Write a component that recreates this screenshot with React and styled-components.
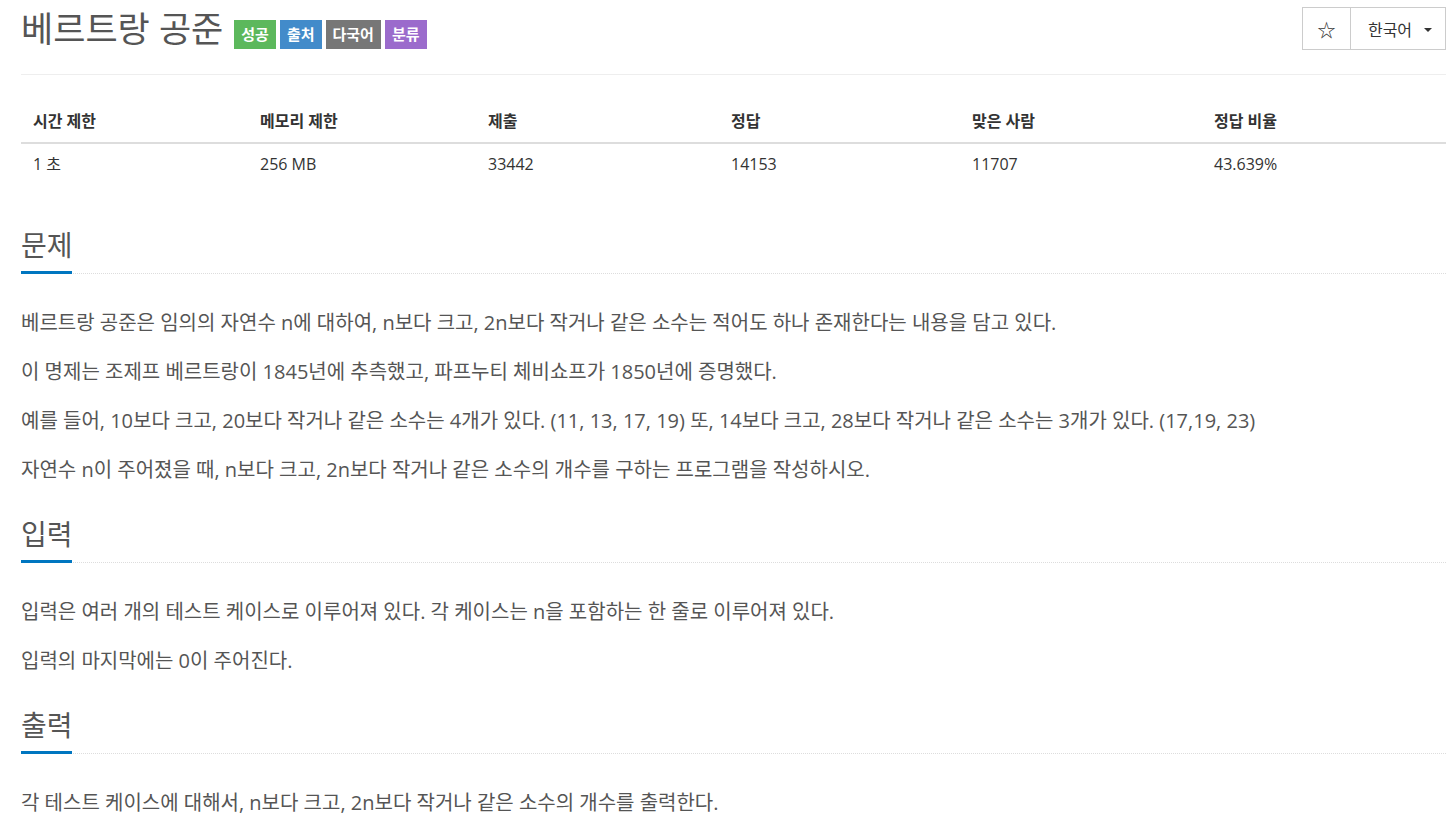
import React from "react";
import styled, {createGlobalStyle} from "styled-components";

const GlobalStyle = createGlobalStyle`
  body {
    margin: 0;
    background: #fff;
    font-family: "Open Sans", "Noto Sans CJK KR", sans-serif;
    color: #555;
  }
`;

const stats = [
  {label: "시간 제한", value: "1 초"},
  {label: "메모리 제한", value: "256 MB"},
  {label: "제출", value: "33442"},
  {label: "정답", value: "14153"},
  {label: "맞은 사람", value: "11707"},
  {label: "정답 비율", value: "43.639%"},
];

const badges = [
  {text: "성공", color: "#5cb85c"},
  {text: "출처", color: "#428bca"},
  {text: "다국어", color: "#777777"},
  {text: "분류", color: "#9b6bcc"},
];

const sections = [
  {
    title: "문제",
    lines: [
      "베르트랑 공준은 임의의 자연수 n에 대하여, n보다 크고, 2n보다 작거나 같은 소수는 적어도 하나 존재한다는 내용을 담고 있다.",
      "이 명제는 조제프 베르트랑이 1845년에 추측했고, 파프누티 체비쇼프가 1850년에 증명했다.",
      "예를 들어, 10보다 크고, 20보다 작거나 같은 소수는 4개가 있다. (11, 13, 17, 19) 또, 14보다 크고, 28보다 작거나 같은 소수는 3개가 있다. (17,19, 23)",
      "자연수 n이 주어졌을 때, n보다 크고, 2n보다 작거나 같은 소수의 개수를 구하는 프로그램을 작성하시오.",
    ],
  },
  {
    title: "입력",
    lines: [
      "입력은 여러 개의 테스트 케이스로 이루어져 있다. 각 케이스는 n을 포함하는 한 줄로 이루어져 있다.",
      "입력의 마지막에는 0이 주어진다.",
    ],
  },
  {
    title: "출력",
    lines: ["각 테스트 케이스에 대해서, n보다 크고, 2n보다 작거나 같은 소수의 개수를 출력한다."],
  },
];

function App() {
  return (
    <Page>
      <GlobalStyle />
      <Header>
        <Title>
          베르트랑 공준
          <Badges>
            {badges.map((b) => (
              <Badge key={b.text} color={b.color}>{b.text}</Badge>
            ))}
          </Badges>
        </Title>
        <BtnGroup>
          <StarBtn>☆</StarBtn>
          <LangBtn>
            한국어 <Caret />
          </LangBtn>
        </BtnGroup>
      </Header>

      <StatsTable>
        {stats.map((s) => (
          <HeadCell key={s.label}>{s.label}</HeadCell>
        ))}
        {stats.map((s) => (
          <Cell key={s.label}>{s.value}</Cell>
        ))}
      </StatsTable>

      {sections.map((sec, idx) => (
        <Section key={sec.title} first={idx === 0}>
          <SectionHead>
            <SectionTitle>{sec.title}</SectionTitle>
          </SectionHead>
          {sec.lines.map((line, i) => (
            <Para key={i}>{line}</Para>
          ))}
        </Section>
      ))}
    </Page>
  );
}

export default App;

const Page = styled.div`
  padding: 0 8px 0 21px;
`;

const Header = styled.div`
  display: flex;
  justify-content: space-between;
  align-items: flex-start;
  padding-top: 7px;
  padding-bottom: 23px;
  border-bottom: 1px solid #eee;
`;

const Title = styled.h1`
  margin: 0;
  display: flex;
  align-items: center;
  font-size: 35px;
  font-weight: 400;
  color: #555;
  line-height: 44px;
`;

const Badges = styled.span`
  display: flex;
  gap: 4px;
  margin-left: 11px;
  margin-top: 11px;
`;

const Badge = styled.span`
  background: ${(p) => p.color};
  color: #fff;
  font-size: 15px;
  font-weight: 700;
  height: 29px;
  line-height: 29px;
  padding: 0 7px;
  display: inline-block;
`;

const BtnGroup = styled.div`
  display: flex;
`;

const BaseBtn = styled.div`
  border: 1px solid #ccc;
  background: #fff;
  color: #333;
  display: flex;
  align-items: center;
  justify-content: center;
  font-size: 16px;
  box-sizing: border-box;
  height: 43px;
`;

const StarBtn = styled(BaseBtn)`
  width: 49px;
  font-size: 18px;
`;

const LangBtn = styled(BaseBtn)`
  width: 95px;
  border-left: none;
  gap: 12px;
  padding-left: 4px;
`;

const Caret = styled.span`
  width: 0;
  height: 0;
  border-left: 4px solid transparent;
  border-right: 4px solid transparent;
  border-top: 4px solid #333;
  margin-top: 2px;
`;

const StatsTable = styled.div`
  display: grid;
  grid-template-columns: 227px 228px 243px 241px 242px 1fr;
  margin-top: 26px;
  font-size: 16px;
`;

const HeadCell = styled.div`
  font-weight: 700;
  color: #333;
  padding: 8px 12px 9px;
  line-height: 24px;
  border-bottom: 2px solid #ddd;
`;

const Cell = styled.div`
  color: #333;
  padding: 5px 12px;
  line-height: 30px;
`;

const Section = styled.section`
  margin-top: ${(p) => (p.first ? "41px" : "29px")};
`;

const SectionHead = styled.div`
  border-bottom: 1px dotted #ddd;
  margin-bottom: 34px;
`;

const SectionTitle = styled.h2`
  display: inline-block;
  margin: 0 0 -1px;
  font-size: 28px;
  font-weight: 400;
  color: #555;
  line-height: 40px;
  padding-bottom: 6px;
  border-bottom: 3px solid #0076c0;
  width: 51px;
  white-space: nowrap;
`;

const Para = styled.p`
  margin: 0 0 19px;
  font-size: 20px;
  line-height: 30px;
  color: #555;
`;
